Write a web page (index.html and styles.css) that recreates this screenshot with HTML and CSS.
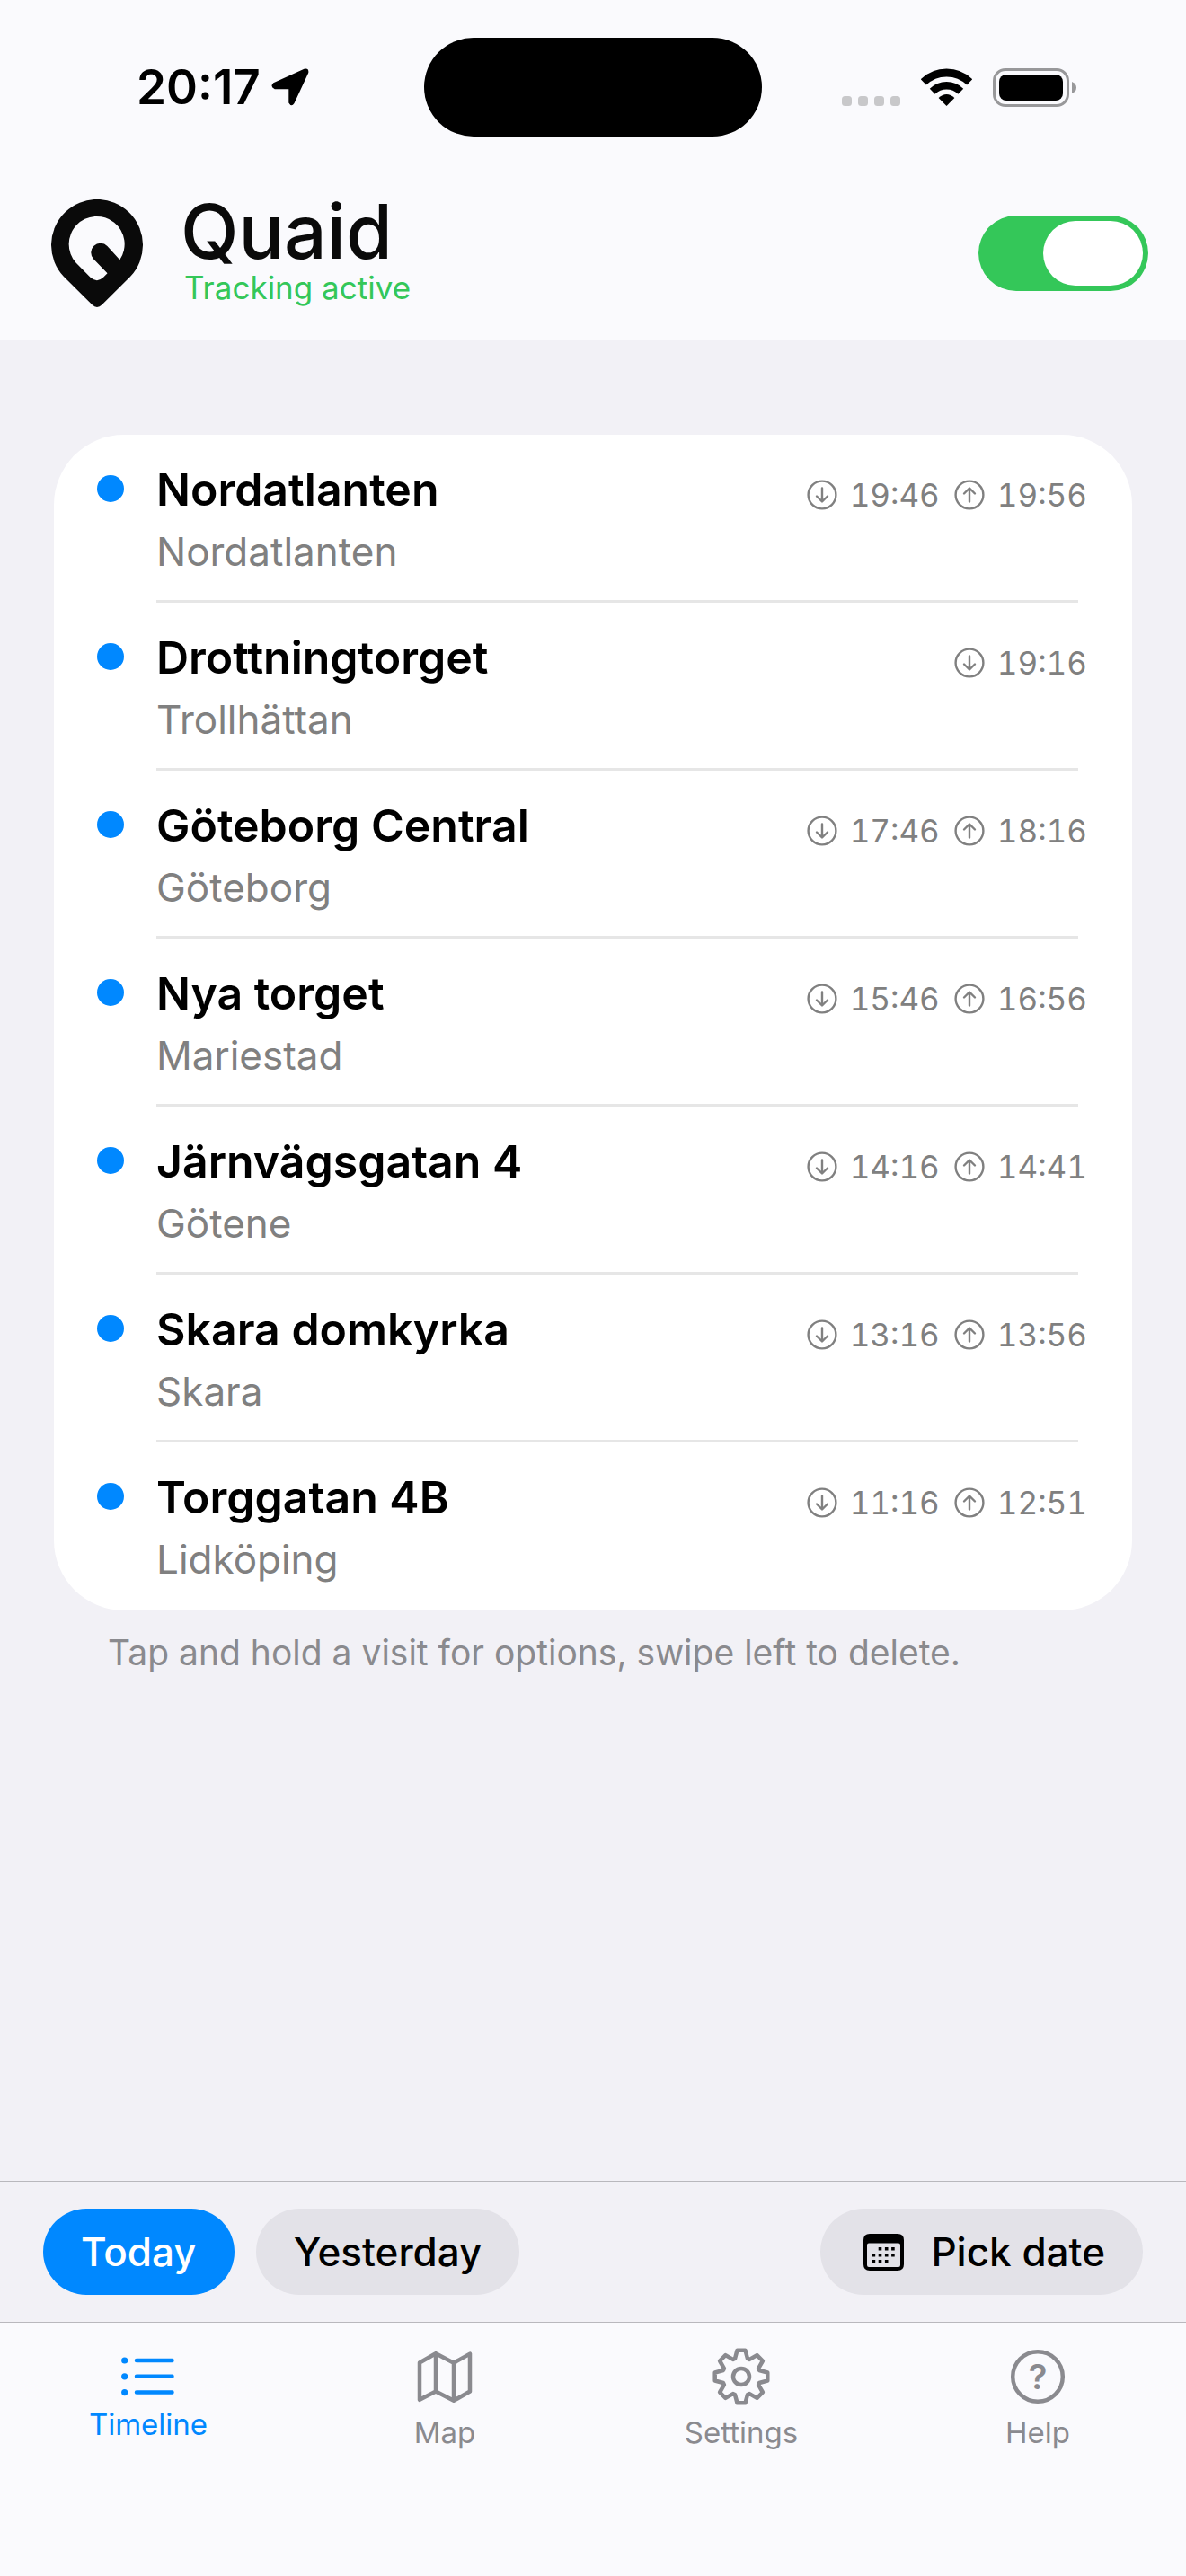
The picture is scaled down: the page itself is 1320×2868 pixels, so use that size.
FILE: index.html
```html
<!DOCTYPE html>
<html lang="en">

<head>
    <meta charset="UTF-8">
    <meta name="viewport" content="width=device-width, initial-scale=1.0">
    <title>Quaid</title>
    <link rel="stylesheet" href="styles.css">
</head>

<body>
    <!-- arrow icons shared by all the rows -->
    <svg class="sprite" aria-hidden="true">
        <symbol id="arrive" viewBox="0 0 34 34">
            <circle cx="17" cy="17" r="15.4" />
            <path d="M17 9.5V24M11 18.5L17 24.5L23 18.5" />
        </symbol>
        <symbol id="leave" viewBox="0 0 34 34">
            <circle cx="17" cy="17" r="15.4" />
            <path d="M17 24.5V10M11 15.5L17 9.5L23 15.5" />
        </symbol>
    </svg>

    <header class="top">
        <div class="status">
            <div class="status-left">
                <span class="clock">20:17</span>
                <svg width="42" height="42" viewBox="0 0 42 42">
                    <path d="M2.3 16.3L36.5 .7Q42 -.8 41.3 5L25.5 39Q22.3 43.6 19.3 38.5V23.2H3.8Q-2 20.5 2.3 16.3Z" />
                </svg>
            </div>
            <div class="island"></div>
            <div class="status-right">
                <svg width="65" height="42" viewBox="0 0 65 42" fill="#c8c8ca">
                    <rect x="0" y="31" width="11" height="11" rx="3.5" />
                    <rect x="18" y="31" width="11" height="11" rx="3.5" />
                    <rect x="36" y="31" width="11" height="11" rx="3.5" />
                    <rect x="54" y="31" width="11" height="11" rx="3.5" />
                </svg>
                <svg width="57" height="42" viewBox="0 0 57 42">
                    <path d="M2.8 15.4A37 37 0 0 1 54.2 15.4" fill="none" stroke="#000" stroke-width="8.8" />
                    <path d="M12.7 25.7A22.7 22.7 0 0 1 44.3 25.7" fill="none" stroke="#000" stroke-width="8.4" />
                    <path d="M28.5 42L19.6 33Q28.5 25.2 37.4 33Z" />
                </svg>
                <svg width="93" height="43" viewBox="0 0 93 43">
                    <rect x="1.5" y="1.5" width="82" height="40" rx="12.5" fill="none" stroke="#98989a" stroke-width="3" />
                    <rect x="7" y="7" width="71" height="29" rx="8" />
                    <path d="M88 15Q93 17 93 21.5T88 28Z" fill="#98989a" />
                </svg>
            </div>
        </div>
        <div class="brand">
            <svg width="102" height="120" viewBox="0 0 102 120">
                <path fill="#0a0a0a" fill-rule="evenodd" d="M14 86A51 51 0 1 1 88 86L56.5 117.3Q51 122.6 45.5 117.3ZM76.3 67.3A31 31 0 1 0 27.5 70.5L43.5 86.7Q51 93.6 58.3 86.6L62.5 82.3L47.2 66.6A10.5 10.5 0 0 1 62.4 52Z" />
            </svg>
            <div class="brand-text">
                <h1>Quaid</h1>
                <p>Tracking active</p>
            </div>
            <input class="switch" type="checkbox" role="switch" aria-label="Tracking" checked>
        </div>
    </header>

    <main>
        <ul class="visits">
            <li>
                <i class="dot"></i>
                <div class="visit">
                    <div class="place">
                        <h2>Nordatlanten</h2>
                        <p>Nordatlanten</p>
                    </div>
                    <div class="times">
                        <svg><use href="#arrive" /></svg><time>19:46</time>
                        <svg><use href="#leave" /></svg><time>19:56</time>
                    </div>
                </div>
            </li>
            <li>
                <i class="dot"></i>
                <div class="visit">
                    <div class="place">
                        <h2>Drottningtorget</h2>
                        <p>Trollhättan</p>
                    </div>
                    <div class="times">
                        <svg><use href="#arrive" /></svg><time>19:16</time>
                    </div>
                </div>
            </li>
            <li>
                <i class="dot"></i>
                <div class="visit">
                    <div class="place">
                        <h2>Göteborg Central</h2>
                        <p>Göteborg</p>
                    </div>
                    <div class="times">
                        <svg><use href="#arrive" /></svg><time>17:46</time>
                        <svg><use href="#leave" /></svg><time>18:16</time>
                    </div>
                </div>
            </li>
            <li>
                <i class="dot"></i>
                <div class="visit">
                    <div class="place">
                        <h2>Nya torget</h2>
                        <p>Mariestad</p>
                    </div>
                    <div class="times">
                        <svg><use href="#arrive" /></svg><time>15:46</time>
                        <svg><use href="#leave" /></svg><time>16:56</time>
                    </div>
                </div>
            </li>
            <li>
                <i class="dot"></i>
                <div class="visit">
                    <div class="place">
                        <h2>Järnvägsgatan 4</h2>
                        <p>Götene</p>
                    </div>
                    <div class="times">
                        <svg><use href="#arrive" /></svg><time>14:16</time>
                        <svg><use href="#leave" /></svg><time>14:41</time>
                    </div>
                </div>
            </li>
            <li>
                <i class="dot"></i>
                <div class="visit">
                    <div class="place">
                        <h2>Skara domkyrka</h2>
                        <p>Skara</p>
                    </div>
                    <div class="times">
                        <svg><use href="#arrive" /></svg><time>13:16</time>
                        <svg><use href="#leave" /></svg><time>13:56</time>
                    </div>
                </div>
            </li>
            <li>
                <i class="dot"></i>
                <div class="visit">
                    <div class="place">
                        <h2>Torggatan 4B</h2>
                        <p>Lidköping</p>
                    </div>
                    <div class="times">
                        <svg><use href="#arrive" /></svg><time>11:16</time>
                        <svg><use href="#leave" /></svg><time>12:51</time>
                    </div>
                </div>
            </li>
        </ul>
        <p class="hint">Tap and hold a visit for options, swipe left to delete.</p>
    </main>

    <div class="days">
        <button class="pill active" type="button">Today</button>
        <button class="pill" type="button">Yesterday</button>
        <button class="pill pick" type="button">
            <svg width="45" height="41" viewBox="0 0 45 41">
                <path fill-rule="evenodd" d="M7 0H38Q45 0 45 7V34Q45 41 38 41H7Q0 41 0 34V7Q0 0 7 0ZM6 10.5Q4 10.5 4 12.5V35Q4 37 6 37H39Q41 37 41 35V12.5Q41 10.5 39 10.5Z" />
                <path fill="none" stroke="#000" stroke-width="3.6" d="M16.7 16.7h3.6m3.6 0h3.6m3.6 0h3.6M9.6 23.7h3.6m3.5 0h3.6m3.6 0h3.6m3.6 0h3.6M9.6 30.7h3.6m3.5 0h3.6m3.6 0h3.6" />
            </svg>
            Pick date
        </button>
    </div>

    <nav class="tabs">
        <a class="active" href="#">
            <svg class="list-icon" width="64" height="64" viewBox="0 0 64 64">
                <g fill="#0088ff">
                    <circle cx="5.7" cy="14" r="3.6" />
                    <circle cx="5.7" cy="31.8" r="3.6" />
                    <circle cx="5.7" cy="49.6" r="3.6" />
                </g>
                <path d="M19 14H58.5M19 31.8H58.5M19 49.6H58.5" />
            </svg>
            Timeline
        </a>
        <a href="#">
            <svg width="64" height="64" viewBox="0 0 64 64">
                <path d="M4 16.5L22 6.2L42 16.7L60 6.6V48.5L42 58.8L22 48.5L4 57.8ZM22 6.2V48.5M42 16.7V58.8" />
            </svg>
            Map
        </a>
        <a href="#">
            <svg width="64" height="64" viewBox="-32 -32 64 64">
                <path d="M-7-20L-4.5-29.3H4.5L7-20L9.2-19.1L17.5-23.9L23.9-17.5L19.1-9.2L20-7L29.3-4.5V4.5L20 7L19.1 9.2L23.9 17.5L17.5 23.9L9.2 19.1L7 20L4.5 29.3H-4.5L-7 20L-9.2 19.1L-17.5 23.9L-23.9 17.5L-19.1 9.2L-20 7L-29.3 4.5V-4.5L-20-7L-19.1-9.2L-23.9-17.5L-17.5-23.9L-9.2-19.1Z" />
                <circle r="9" />
            </svg>
            Settings
        </a>
        <a href="#">
            <svg width="64" height="64" viewBox="0 0 64 64">
                <circle cx="32" cy="32" r="27.8" />
                <text x="32" y="46" text-anchor="middle">?</text>
            </svg>
            Help
        </a>
    </nav>
</body>

</html>
```

FILE: styles.css
```css
* {
    box-sizing: border-box;
}

body {
    margin: 0;
    min-height: 100vh;
    display: flex;
    flex-direction: column;
    background: #f2f1f6;
    font-family: Inter, "Liberation Sans", sans-serif;
    color: #000;
}

h1,
h2,
p,
ul {
    margin: 0;
    padding: 0;
}

svg {
    display: block;
    flex: none;
}

.sprite {
    position: absolute;
    width: 0;
    height: 0;
}

/* status bar and app header */
.top {
    background: #fafafd;
    border-bottom: 1px solid #b9b8bd;
}

.status {
    display: grid;
    grid-template-columns: 1fr 376px 1fr;
    align-items: center;
    padding-top: 42px;
}

.status-left {
    display: flex;
    align-items: center;
    gap: 12px;
    padding-left: 152px;
}

.clock {
    font-size: 53px;
    line-height: 64px;
    font-weight: 600;
}

.island {
    height: 110px;
    border-radius: 55px;
    background: #000;
}

.status-right {
    display: flex;
    align-items: center;
    justify-content: flex-end;
    gap: 23px;
    padding-right: 122px;
}

.brand {
    display: flex;
    align-items: center;
    gap: 42px;
    padding: 68px 42px 34px 57px;
}

.brand-text {
    flex: 1;
}

h1 {
    font-size: 84px;
    line-height: 76px;
    font-weight: 500;
    color: #0a0a0a;
}

.brand-text p {
    padding-left: 4px;
    font-size: 35px;
    line-height: 48px;
    color: #34c759;
}

.switch {
    appearance: none;
    margin: 0;
    width: 189px;
    height: 84px;
    padding: 6px;
    border-radius: 42px;
    background: #d8d8dc;
    display: flex;
}

.switch::before {
    content: "";
    width: 111px;
    border-radius: 36px;
    background: #fff;
}

.switch:checked {
    background: #34c759;
    justify-content: flex-end;
}

/* visits */
main {
    flex: 1;
    padding: 105px 60px 0;
}

.visits {
    list-style: none;
    background: #fff;
    border-radius: 78px;
}

.visits li {
    display: flex;
    gap: 36px;
    padding: 0 60px 0 48px;
}

.dot {
    flex: none;
    width: 30px;
    height: 30px;
    margin-top: 45px;
    border-radius: 50%;
    background: #0088ff;
}

.visit {
    flex: 1;
    display: flex;
    justify-content: space-between;
    align-items: flex-start;
    padding: 28px 0 18px;
    border-bottom: 3px solid #e6e6e6;
}

.visits li:last-child .visit {
    border-color: transparent;
}

h2 {
    font-size: 50px;
    line-height: 66px;
    font-weight: 600;
}

.place p {
    font-size: 44px;
    line-height: 72px;
    color: #808080;
}

.times {
    display: flex;
    align-items: center;
    margin: 17px -10px 0 0;
    font-size: 35px;
    line-height: 44px;
    font-variant-numeric: tabular-nums;
    color: #808080;
}

.times svg {
    width: 34px;
    height: 34px;
    margin-right: 14px;
    fill: none;
    stroke: #808080;
    stroke-width: 2.4;
    stroke-linecap: round;
    stroke-linejoin: round;
}

.times time + svg {
    margin-left: 16px;
}

.hint {
    margin: 23px 60px 0;
    font-size: 39px;
    line-height: 48px;
    color: #8a8a8e;
}

/* day buttons */
.days {
    display: flex;
    gap: 24px;
    padding: 30px 48px;
    border-top: 1px solid #b9b8bd;
    border-bottom: 1px solid #b9b8bd;
}

.pill {
    height: 96px;
    padding: 0 42px;
    border: 0;
    border-radius: 48px;
    background: #e3e2e8;
    color: #000;
    font: 500 44px/56px Inter, "Liberation Sans", sans-serif;
}

.pill.active {
    background: #0088ff;
    color: #fff;
}

.pick {
    display: flex;
    align-items: center;
    gap: 30px;
    margin-left: auto;
    padding-left: 48px;
}

/* tab bar */
.tabs {
    display: grid;
    grid-template-columns: repeat(4, 1fr);
    padding: 28px 0 140px;
    background: #fafafd;
}

.tabs a {
    display: flex;
    flex-direction: column;
    align-items: center;
    gap: 10px;
    font-size: 33px;
    line-height: 40px;
    text-decoration: none;
    color: #8a8a8f;
}

.tabs svg {
    fill: none;
    stroke: #8a8a8f;
    stroke-width: 4.5;
    stroke-linecap: round;
    stroke-linejoin: round;
}

.tabs text {
    fill: #8a8a8f;
    stroke: none;
    font-size: 38px;
    font-weight: 600;
}

.tabs .active {
    color: #0088ff;
}

.tabs .active path {
    stroke: #0088ff;
}

.tabs g {
    stroke: none;
}

.list-icon {
    margin-bottom: -9px;
}
```
